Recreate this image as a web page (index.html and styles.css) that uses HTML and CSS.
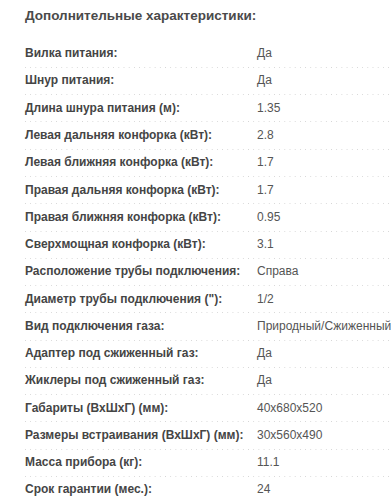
FILE: index.html
```html
<!DOCTYPE html>
<html lang="ru">
<head>
<meta charset="utf-8">
<link rel="stylesheet" href="styles.css">
</head>
<body>
<section class="specs">
  <h3 class="specs-title">Дополнительные характеристики:</h3>
  <dl class="specs-list">
    <div class="row"><dt>Вилка питания:</dt><dd>Да</dd></div>
    <div class="row"><dt>Шнур питания:</dt><dd>Да</dd></div>
    <div class="row"><dt>Длина шнура питания (м):</dt><dd>1.35</dd></div>
    <div class="row"><dt>Левая дальняя конфорка (кВт):</dt><dd>2.8</dd></div>
    <div class="row"><dt>Левая ближняя конфорка (кВт):</dt><dd>1.7</dd></div>
    <div class="row"><dt>Правая дальняя конфорка (кВт):</dt><dd>1.7</dd></div>
    <div class="row"><dt>Правая ближняя конфорка (кВт):</dt><dd>0.95</dd></div>
    <div class="row"><dt>Сверхмощная конфорка (кВт):</dt><dd>3.1</dd></div>
    <div class="row"><dt>Расположение трубы подключения:</dt><dd>Справа</dd></div>
    <div class="row"><dt>Диаметр трубы подключения ("):</dt><dd>1/2</dd></div>
    <div class="row"><dt>Вид подключения газа:</dt><dd>Природный/Сжиженный</dd></div>
    <div class="row"><dt>Адаптер под сжиженный газ:</dt><dd>Да</dd></div>
    <div class="row"><dt>Жиклеры под сжиженный газ:</dt><dd>Да</dd></div>
    <div class="row"><dt>Габариты (ВхШхГ) (мм):</dt><dd>40x680x520</dd></div>
    <div class="row"><dt>Размеры встраивания (ВхШхГ) (мм):</dt><dd>30x560x490</dd></div>
    <div class="row"><dt>Масса прибора (кг):</dt><dd>11.1</dd></div>
    <div class="row"><dt>Срок гарантии (мес.):</dt><dd>24</dd></div>
  </dl>
</section>
</body>
</html>
```
FILE: styles.css
```css
html, body {
  margin: 0;
  padding: 0;
  background: #ffffff;
}
body {
  font-family: "Liberation Sans", Arial, sans-serif;
  color: #555555;
  overflow: hidden;
}
.specs {
  padding: 6px 0 0 25px;
}
.specs-title {
  margin: 0;
  font-size: 13.5px;
  font-weight: bold;
  line-height: 20px;
  color: #4a4a4a;
  height: 34.7px;
}
.specs-list {
  margin: 0;
}
.row {
  display: grid;
  grid-template-columns: 232px 1fr;
  font-size: 12px;
  line-height: 17.27px;
  padding: 4.5px 0 4.5px;
  border-bottom: 1px solid transparent;
  background-image: linear-gradient(to right, #d6d6d6 0 1px, transparent 1px);
  background-size: 5.2px 1px;
  background-repeat: repeat-x;
  background-position: 0 100%;
  background-origin: border-box;
  background-clip: border-box;
}
.row dt {
  font-weight: bold;
  color: #454545;
  white-space: nowrap;
}
.row dd {
  margin: 0;
  color: #555555;
  white-space: nowrap;
}
```
